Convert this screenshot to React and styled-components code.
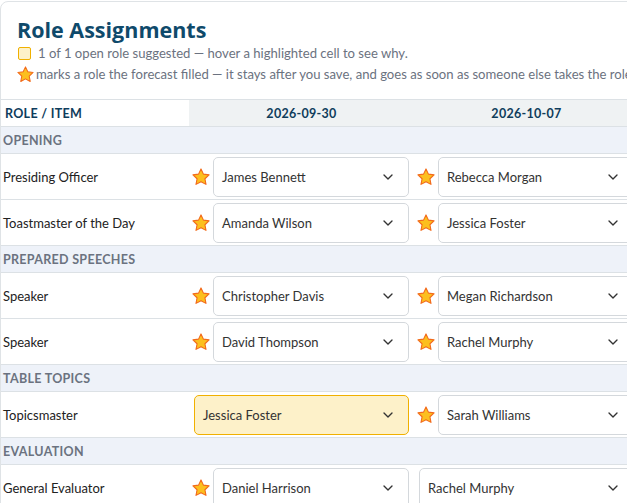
import React from 'react';
import styled, { createGlobalStyle } from 'styled-components';
import { ChevronDown } from 'lucide-react';

const GlobalStyle = createGlobalStyle`
  html, body {
    margin: 0;
    padding: 0;
    background: #ffffff;
    overflow: hidden;
  }
  body {
    font-family: Lato, "Liberation Sans", sans-serif;
    color: #222;
  }
`;

const Card = styled.div`
  width: 900px;
  margin-top: 1px;
  border: 1px solid #dfe3e6;
  border-radius: 8px;
  background: #fff;
  overflow: hidden;
`;

const Header = styled.div`
  padding: 15px 16px 14px;
`;

const Title = styled.h1`
  margin: 0;
  font-family: "Open Sans", "DejaVu Sans", sans-serif;
  font-size: 21.5px;
  font-weight: 700;
  color: #0f4a6b;
  line-height: 26px;
`;

const Note = styled.div`
  display: flex;
  align-items: center;
  gap: ${({ gap }) => gap || 6}px;
  font-size: 13.1px;
  color: #6b7280;
  line-height: 21px;
  white-space: nowrap;
`;

const Swatch = styled.span`
  display: inline-block;
  width: 11px;
  height: 11px;
  border: 1px solid #f0b000;
  border-radius: 2px;
  background: #fdf1c9;
  margin-left: 1px;
`;

const Grid = styled.div`
  display: grid;
  grid-template-columns: 188px 225px 225px 225px;
  border-top: 1px solid #dce1e5;
`;

const HeadCell = styled.div`
  height: 26px;
  display: flex;
  align-items: center;
  justify-content: ${({ left }) => (left ? 'flex-start' : 'center')};
  padding-left: ${({ left }) => (left ? '4px' : '0')};
  background: ${({ left }) => (left ? '#fff' : '#eff2f3')};
  border-bottom: 1px solid #dce1e5;
  font-size: 12.5px;
  font-weight: 700;
  letter-spacing: 0.3px;
  color: #0f3d5c;
`;

const SectionCell = styled.div`
  grid-column: 1 / -1;
  height: 26px;
  display: flex;
  align-items: center;
  padding-left: 2px;
  background: #eef2f9;
  border-bottom: 1px solid #dce1e5;
  font-size: 12.5px;
  font-weight: 700;
  letter-spacing: 0.3px;
  color: #6b7280;
  text-transform: uppercase;
`;

const LabelCell = styled.div`
  height: 45px;
  display: flex;
  align-items: center;
  padding-left: 2px;
  border-bottom: 1px solid #dce1e5;
  font-size: 13px;
  color: #222;
`;

const Cell = styled.div`
  height: 45px;
  display: flex;
  align-items: center;
  gap: 3px;
  padding: 0 5px 0 ${({ starred }) => (starred ? 3 : 5)}px;
  border-bottom: 1px solid #dce1e5;
`;

const Select = styled.div`
  flex: 1;
  height: 38px;
  display: flex;
  align-items: center;
  justify-content: space-between;
  padding: 0 12px 0 8px;
  border: 1px solid ${({ suggested }) => (suggested ? '#f0b000' : '#d4d8dc')};
  border-radius: 5px;
  background: ${({ suggested }) => (suggested ? '#fdf1c9' : '#fff')};
  font-size: 13px;
  color: #333;
  white-space: nowrap;
`;

const StarIcon = ({ size = 18 }) => (
  <svg width={size} height={size} viewBox="1.5 1.5 21 21" style={{ flex: 'none' }}>
    <path
      d="M12 2.6l2.85 6.05 6.55.85-4.8 4.55 1.2 6.55L12 17.45 6.2 20.6l1.2-6.55-4.8-4.55 6.55-.85z"
      fill="#fcbf1e"
      stroke="#f26a1b"
      strokeWidth="1.3"
      strokeLinejoin="round"
    />
  </svg>
);

const dates = ['2026-09-30', '2026-10-07', '2026-10-14'];

const sections = [
  {
    name: 'Opening',
    rows: [
      { role: 'Presiding Officer', cells: [['James Bennett', 's'], ['Rebecca Morgan', 's'], ['Kevin Parker', 's']] },
      { role: 'Toastmaster of the Day', cells: [['Amanda Wilson', 's'], ['Jessica Foster', 's'], ['Laura Mitchell', 's']] },
    ],
  },
  {
    name: 'Prepared Speeches',
    rows: [
      { role: 'Speaker', cells: [['Christopher Davis', 's'], ['Megan Richardson', 's'], ['Brian Cooper', 's']] },
      { role: 'Speaker', cells: [['David Thompson', 's'], ['Rachel Murphy', 's'], ['Emily Carter', 's']] },
    ],
  },
  {
    name: 'Table Topics',
    rows: [
      { role: 'Topicsmaster', cells: [['Jessica Foster', 'h'], ['Sarah Williams', 's'], ['James Bennett', 's']] },
    ],
  },
  {
    name: 'Evaluation',
    rows: [
      { role: 'General Evaluator', cells: [['Daniel Harrison', 's'], ['Rachel Murphy', ''], ['Amanda Wilson', 's']] },
    ],
  },
];

export default function App() {
  return (
    <>
      <GlobalStyle />
      <Card>
        <Header>
          <Title>Role Assignments</Title>
          <Note gap={7}>
            <Swatch />
            <span>1 of 1 open role suggested — hover a highlighted cell to see why.</span>
          </Note>
          <Note gap={2}>
            <StarIcon size={17} />
            <span>
              marks a role the forecast filled — it stays after you save, and goes as soon as someone else takes the role.
            </span>
          </Note>
        </Header>
        <Grid>
          <HeadCell left>ROLE / ITEM</HeadCell>
          {dates.map((d) => (
            <HeadCell key={d}>{d}</HeadCell>
          ))}
          {sections.map((sec) => (
            <React.Fragment key={sec.name}>
              <SectionCell>{sec.name}</SectionCell>
              {sec.rows.map((row, ri) => (
                <React.Fragment key={ri}>
                  <LabelCell>{row.role}</LabelCell>
                  {row.cells.map(([name, kind], ci) => (
                    <Cell key={ci} starred={kind === 's'}>
                      {kind === 's' && <StarIcon />}
                      <Select suggested={kind === 'h'}>
                        <span>{name}</span>
                        <ChevronDown size={16} strokeWidth={2} color="#333" />
                      </Select>
                    </Cell>
                  ))}
                </React.Fragment>
              ))}
            </React.Fragment>
          ))}
        </Grid>
      </Card>
    </>
  );
}
